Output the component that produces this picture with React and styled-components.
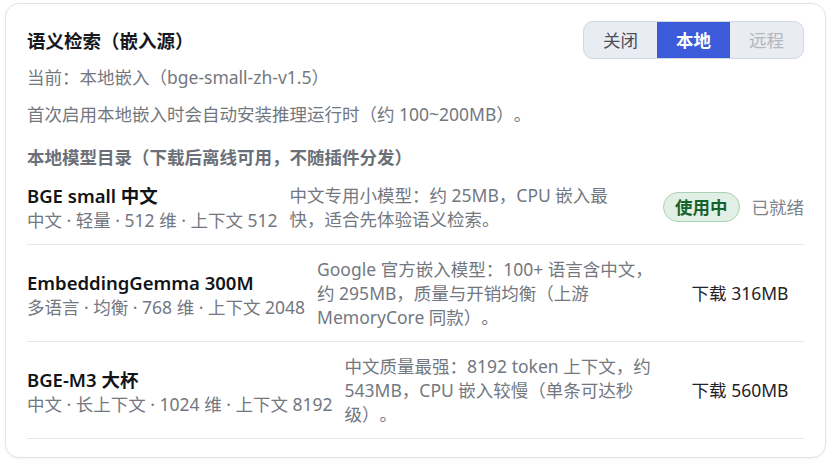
import React, {useState} from 'react';
import styled, {createGlobalStyle} from 'styled-components';

const GlobalStyle = createGlobalStyle`
  html, body {
    margin: 0;
    background: #ffffff;
  }
  body {
    font-family: "Noto Sans", "Noto Sans CJK SC", sans-serif;
    color: #1f2328;
    text-spacing-trim: space-all;
  }
  #root {
    padding: 3px 2px 3px 5px;
  }
`;

const Card = styled.section`
  border: 1px solid #e3e4e6;
  border-radius: 14px;
  padding: 17px 21px 18px;
  box-shadow: 0 1px 3px rgba(0, 0, 0, 0.05);
  background: #fff;
`;

const Header = styled.div`
  display: flex;
  align-items: center;
  justify-content: space-between;
`;

const Title = styled.h2`
  margin: 0;
  font-size: 18.5px;
  font-weight: 700;
  color: #16181d;
`;

const Segmented = styled.div`
  display: flex;
  border: 1px solid #d2d6dd;
  border-radius: 10px;
  overflow: hidden;
  background: #e9ecf2;
`;

const Segment = styled.button`
  border: 0;
  margin: 0;
  padding: 7px 0;
  width: 73px;
  font-family: inherit;
  font-size: 17.5px;
  line-height: 22px;
  cursor: ${p => (p.disabled ? 'default' : 'pointer')};
  background: ${p => (p.active ? '#3b5bdb' : 'transparent')};
  color: ${p => (p.active ? '#ffffff' : p.disabled ? '#b3b7be' : '#4b4f56')};
  font-weight: ${p => (p.active ? 700 : 400)};
`;

const Muted = styled.p`
  margin: ${p => p.top || 0}px 0 0;
  font-size: 17.5px;
  line-height: 24px;
  color: #737880;
`;

const SectionTitle = styled.h3`
  margin: 19px 0 0;
  font-size: 17.5px;
  line-height: 24px;
  font-weight: 700;
  color: #6b7078;
`;

const Row = styled.div`
  display: flex;
  align-items: center;
  gap: 12px;
  padding: 12px 0;
  border-bottom: 1px solid #e5e7eb;
`;

const NameCol = styled.div`
  flex-shrink: 0;
  display: flex;
  flex-direction: column;
  padding-top: 3px;
`;

const Name = styled.div`
  font-size: 18.5px;
  line-height: 24px;
  font-weight: 600;
  color: #111418;
  b {
    font-weight: 700;
  }
`;

const Meta = styled.div`
  font-size: 17.5px;
  line-height: 24px;
  color: #737880;
`;

const Desc = styled.div`
  flex: 1;
  padding-right: 10px;
  font-size: 17.5px;
  line-height: 24px;
  color: #737880;
`;

const Side = styled.div`
  min-width: 128px;
  display: flex;
  align-items: center;
  justify-content: center;
  gap: 12px;
  font-size: 17.5px;
  line-height: 24px;
  color: #1f2328;
`;

const Badge = styled.span`
  border: 1px solid #a8d2b1;
  background: #e2efe5;
  color: #17632f;
  font-weight: 700;
  border-radius: 999px;
  padding: 2px 11px;
`;

const Status = styled.span`
  color: #80858c;
`;

const models = [
    {
        id: 'bge-small',
        name: 'BGE small',
        cn: '中文',
        meta: '中文 · 轻量 · 512 维 · 上下文 512',
        desc: '中文专用小模型：约 25MB，CPU 嵌入最快，适合先体验语义检索。',
        active: true,
    },
    {
        id: 'gemma',
        name: 'EmbeddingGemma 300M',
        meta: '多语言 · 均衡 · 768 维 · 上下文 2048',
        desc: 'Google 官方嵌入模型：100+ 语言含中文，约 295MB，质量与开销均衡（上游 MemoryCore 同款）。',
        size: '316MB',
    },
    {
        id: 'bge-m3',
        name: 'BGE-M3',
        cn: '大杯',
        meta: '中文 · 长上下文 · 1024 维 · 上下文 8192',
        desc: '中文质量最强：8192 token 上下文，约 543MB，CPU 嵌入较慢（单条可达秒级）。',
        size: '560MB',
    },
];

const ModelRow = ({it}) => (
    <Row>
        <NameCol>
            <Name>{it.name}{it.cn && <> <b>{it.cn}</b></>}</Name>
            <Meta>{it.meta}</Meta>
        </NameCol>
        <Desc>{it.desc}</Desc>
        <Side>
            {it.active ? (
                <>
                    <Badge>使用中</Badge>
                    <Status>已就绪</Status>
                </>
            ) : (
                <span>下载 {it.size}</span>
            )}
        </Side>
    </Row>
);

const App = () => {
    const [mode, setMode] = useState('local');
    return (
        <>
            <GlobalStyle/>
            <Card>
                <Header>
                    <Title>语义检索（嵌入源）</Title>
                    <Segmented>
                        <Segment active={mode === 'off'} onClick={() => setMode('off')}>关闭</Segment>
                        <Segment active={mode === 'local'} onClick={() => setMode('local')}>本地</Segment>
                        <Segment disabled>远程</Segment>
                    </Segmented>
                </Header>
                <Muted top={6}>当前：本地嵌入（bge-small-zh-v1.5）</Muted>
                <Muted top={13}>首次启用本地嵌入时会自动安装推理运行时（约 100~200MB）。</Muted>
                <SectionTitle>本地模型目录（下载后离线可用，不随插件分发）</SectionTitle>
                {models.map(it => <ModelRow key={it.id} it={it}/>)}
            </Card>
        </>
    );
};

export default App;
